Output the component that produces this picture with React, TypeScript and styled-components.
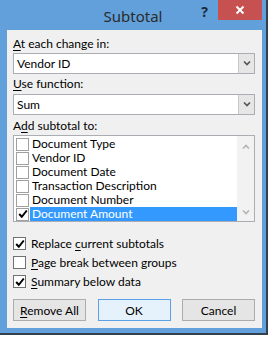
import React from 'react';
import styled, { createGlobalStyle } from 'styled-components';

const Global = createGlobalStyle`
  html, body { margin: 0; padding: 0; background: #ffffff; }
  body { font-family: "Segoe UI", Lato, "Noto Sans", sans-serif; font-size: 12px; color: #000; }
  u { text-decoration: underline; text-underline-offset: 2px; }
`;

const Frame = styled.div`
  width: 266px;
  height: 333px;
  background: #61a0da;
  border-right: 2px solid #34404c;
  border-bottom: 2px solid #34404c;
  display: flex;
  flex-direction: column;
`;

const TitleBar = styled.div`
  height: 30px;
  display: grid;
  grid-template-columns: 1fr auto 1fr;
  flex-shrink: 0;
`;

const Title = styled.div`
  grid-column: 2;
  font-family: "Noto Sans", sans-serif;
  font-size: 15px;
  line-height: 16px;
  padding-top: 8px;
  color: #2b2b2b;
`;

const Controls = styled.div`
  grid-column: 3;
  display: flex;
  justify-content: flex-end;
  align-items: flex-start;
  padding-right: 4px;
`;

const Help = styled.div`
  font-family: "Noto Sans", sans-serif;
  font-weight: bold;
  font-size: 14px;
  line-height: 14px;
  color: #1e2a36;
  padding-top: 5px;
  margin-right: 10px;
`;

const Close = styled.div`
  width: 44px;
  height: 20px;
  background: #c75050;
  display: flex;
  align-items: center;
  justify-content: center;
`;

const Panel = styled.div`
  flex: 1;
  margin: 0 4px 5px 7px;
  background: #f0f0f0;
  padding: 6px 7px 7px 6px;
  display: flex;
  flex-direction: column;
`;

const Label = styled.div<{ $mt?: number }>`
  height: 16px;
  line-height: 16px;
  margin-top: ${p => p.$mt ?? 0}px;
  white-space: nowrap;
`;

const Combo = styled.div<{ $mt?: number }>`
  height: 21px;
  margin-top: ${p => p.$mt ?? 0}px;
  box-sizing: border-box;
  border: 1px solid #abadb3;
  background: #fff;
  display: flex;
`;

const ComboText = styled.div`
  flex: 1;
  padding-left: 3px;
  line-height: 19px;
`;

const ComboButton = styled.div`
  width: 15px;
  background: #e6e6e6;
  border-left: 1px solid #c9c9c9;
  display: flex;
  align-items: center;
  justify-content: center;
`;

const List = styled.div`
  height: 87px;
  margin-top: 1px;
  box-sizing: border-box;
  border: 1px solid #abadb3;
  background: #fff;
  display: flex;
`;

const Items = styled.div`
  flex: 1;
  padding: 1px 0 0 2px;
  display: flex;
  flex-direction: column;
`;

const Item = styled.div`
  height: 14px;
  display: flex;
  align-items: center;
`;

const Box = styled.div<{ $border: string }>`
  width: 13px;
  height: 13px;
  box-sizing: border-box;
  border: 1px solid ${p => p.$border};
  background: #fff;
  display: flex;
  align-items: center;
  justify-content: center;
  flex-shrink: 0;
`;

const ItemText = styled.div<{ $selected?: boolean }>`
  flex: 1;
  margin-left: 1px;
  height: 14px;
  line-height: 14px;
  padding-left: 2px;
  white-space: nowrap;
  overflow: hidden;
  background: ${p => (p.$selected ? '#3399ff' : 'transparent')};
  color: ${p => (p.$selected ? '#fff' : '#000')};
`;

const ScrollBar = styled.div`
  width: 17px;
  background: #f2f2f2;
  display: flex;
  flex-direction: column;
  justify-content: space-between;
  align-items: center;
  padding: 8px 0 6px;
`;

const Options = styled.div`
  margin-top: 12px;
  display: flex;
  flex-direction: column;
`;

const Option = styled.div`
  height: 19px;
  display: flex;
  align-items: center;
  gap: 5px;
  white-space: nowrap;
`;

const Buttons = styled.div`
  margin-top: 8px;
  display: flex;
  justify-content: space-between;
`;

const Button = styled.div<{ $default?: boolean }>`
  width: 73px;
  height: 22px;
  box-sizing: border-box;
  border: 1px solid ${p => (p.$default ? '#5aa0e6' : '#acacac')};
  background: ${p => (p.$default ? '#e5f1fb' : '#e5e5e5')};
  display: flex;
  align-items: center;
  justify-content: center;
`;

const Chevron = ({ up, color }: { up?: boolean; color: string }) => (
  <svg width="8" height="5" viewBox="0 0 8 5">
    <polyline
      points={up ? '1,4.5 4,1.5 7,4.5' : '1,0.5 4,3.5 7,0.5'}
      fill="none"
      stroke={color}
      strokeWidth="1.6"
    />
  </svg>
);

const Check = () => (
  <svg width="10" height="10" viewBox="0 0 10 10">
    <polyline points="1.2,5 3.8,7.8 8.8,1.5" fill="none" stroke="#000" strokeWidth="2" />
  </svg>
);

const fields = [
  'Document Type',
  'Vendor ID',
  'Document Date',
  'Transaction Description',
  'Document Number',
  'Document Amount',
];

export default function App() {
  return (
    <>
      <Global />
      <Frame>
        <TitleBar>
          <Title>Subtotal</Title>
          <Controls>
            <Help>?</Help>
            <Close>
              <svg width="10" height="10" viewBox="0 0 10 10">
                <path d="M1.5 1.5 L8.5 8.5 M8.5 1.5 L1.5 8.5" stroke="#fff" strokeWidth="2" />
              </svg>
            </Close>
          </Controls>
        </TitleBar>
        <Panel>
          <Label>
            <u>A</u>t each change in:
          </Label>
          <Combo $mt={1}>
            <ComboText>Vendor ID</ComboText>
            <ComboButton>
              <Chevron color="#555" />
            </ComboButton>
          </Combo>
          <Label $mt={2}>
            <u>U</u>se function:
          </Label>
          <Combo $mt={2}>
            <ComboText>Sum</ComboText>
            <ComboButton>
              <Chevron color="#555" />
            </ComboButton>
          </Combo>
          <Label $mt={3}>
            A<u>d</u>d subtotal to:
          </Label>
          <List>
            <Items>
              {fields.map((f, i) => {
                const sel = i === fields.length - 1;
                return (
                  <Item key={f}>
                    <Box $border="#a0a0a0">{sel && <Check />}</Box>
                    <ItemText $selected={sel}>{f}</ItemText>
                  </Item>
                );
              })}
            </Items>
            <ScrollBar>
              <Chevron up color="#b4b4b4" />
              <Chevron color="#b4b4b4" />
            </ScrollBar>
          </List>
          <Options>
            <Option>
              <Box $border="#707070">
                <Check />
              </Box>
              <span>
                Replace <u>c</u>urrent subtotals
              </span>
            </Option>
            <Option>
              <Box $border="#707070" />
              <span>
                <u>P</u>age break between groups
              </span>
            </Option>
            <Option>
              <Box $border="#707070">
                <Check />
              </Box>
              <span>
                <u>S</u>ummary below data
              </span>
            </Option>
          </Options>
          <Buttons>
            <Button>
              <span>
                <u>R</u>emove All
              </span>
            </Button>
            <Button $default>OK</Button>
            <Button>Cancel</Button>
          </Buttons>
        </Panel>
      </Frame>
    </>
  );
}
